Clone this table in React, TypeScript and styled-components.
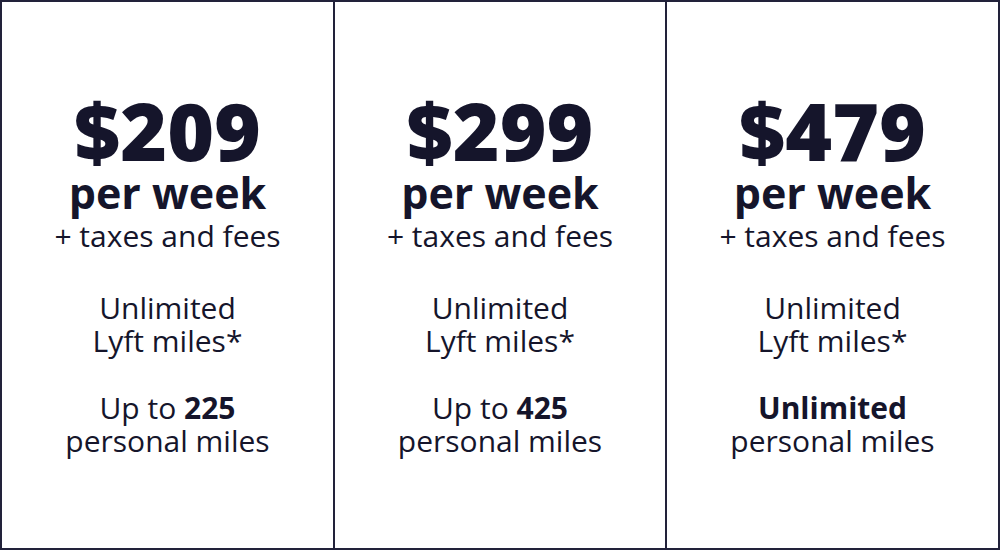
import React from "react";
import styled, { createGlobalStyle } from "styled-components";

const Global = createGlobalStyle`
  html, body { margin: 0; padding: 0; background: #fff; }
  body { font-family: "Open Sans", "Noto Sans", sans-serif; color: #15152b; }
`;

const Board = styled.div`
  box-sizing: border-box;
  width: 1000px;
  height: 550px;
  border: 2px solid #22223a;
  display: grid;
  grid-template-columns: 331px 332px 1fr;
  background: #fff;
`;

const Column = styled.div<{ $divider?: boolean }>`
  display: flex;
  flex-direction: column;
  align-items: center;
  justify-content: flex-start;
  padding-top: 88px;
  text-align: center;
  border-left: ${(p) => (p.$divider ? "2px solid #22223a" : "none")};
`;

const Price = styled.div`
  font-size: 80px;
  font-weight: 800;
  line-height: 80px;
`;

const Period = styled.div`
  font-size: 43px;
  font-weight: 700;
  line-height: 46px;
`;

const Fees = styled.div`
  margin-top: 3px;
  font-size: 30px;
  font-weight: 400;
  line-height: 34px;
`;

const Feature = styled.p`
  margin: 34px 0 0;
  font-size: 30px;
  line-height: 33px;
  font-weight: 400;
  &:first-of-type { margin-top: 38px; }
  b { font-weight: 700; }
`;

type Plan = { price: string; personal: React.ReactNode };

const plans: Plan[] = [
  { price: "$209", personal: <>Up to <b>225</b></> },
  { price: "$299", personal: <>Up to <b>425</b></> },
  { price: "$479", personal: <b>Unlimited</b> },
];

export default function App() {
  return (
    <>
      <Global />
      <Board>
        {plans.map((p, i) => (
          <Column key={p.price} $divider={i > 0}>
            <Price>{p.price}</Price>
            <Period>per week</Period>
            <Fees>+ taxes and fees</Fees>
            <Feature>
              Unlimited
              <br />
              Lyft miles*
            </Feature>
            <Feature>
              {p.personal}
              <br />
              personal miles
            </Feature>
          </Column>
        ))}
      </Board>
    </>
  );
}
